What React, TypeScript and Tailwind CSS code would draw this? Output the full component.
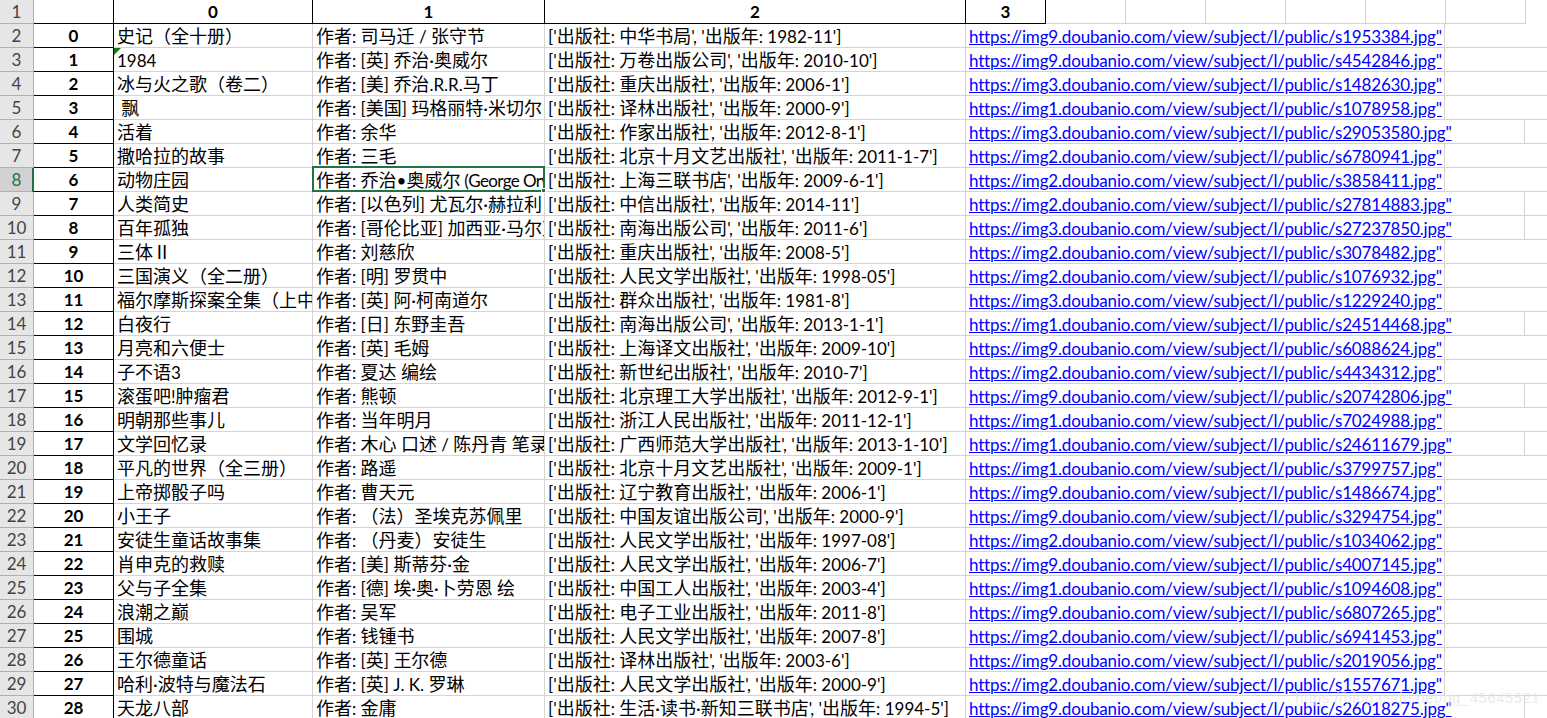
import React from "react";

const rows: [string, string, string, string, string][] = [
  ["史记（全十册）", "作者: 司马迁 / 张守节", "['出版社: 中华书局', '出版年: 1982-11']", "img9", "s1953384"],
  ["1984", "作者: [英] 乔治·奥威尔", "['出版社: 万卷出版公司', '出版年: 2010-10']", "img9", "s4542846"],
  ["冰与火之歌（卷二）", "作者: [美] 乔治.R.R.马丁", "['出版社: 重庆出版社', '出版年: 2006-1']", "img3", "s1482630"],
  [" 飘", "作者: [美国] 玛格丽特·米切尔", "['出版社: 译林出版社', '出版年: 2000-9']", "img1", "s1078958"],
  ["活着", "作者: 余华", "['出版社: 作家出版社', '出版年: 2012-8-1']", "img3", "s29053580"],
  ["撒哈拉的故事", "作者: 三毛", "['出版社: 北京十月文艺出版社', '出版年: 2011-1-7']", "img2", "s6780941"],
  ["动物庄园", "作者: 乔治•奥威尔 (George Orwell)", "['出版社: 上海三联书店', '出版年: 2009-6-1']", "img2", "s3858411"],
  ["人类简史", "作者: [以色列] 尤瓦尔·赫拉利", "['出版社: 中信出版社', '出版年: 2014-11']", "img2", "s27814883"],
  ["百年孤独", "作者: [哥伦比亚] 加西亚·马尔克斯", "['出版社: 南海出版公司', '出版年: 2011-6']", "img3", "s27237850"],
  ["三体Ⅱ", "作者: 刘慈欣", "['出版社: 重庆出版社', '出版年: 2008-5']", "img2", "s3078482"],
  ["三国演义（全二册）", "作者: [明] 罗贯中", "['出版社: 人民文学出版社', '出版年: 1998-05']", "img2", "s1076932"],
  ["福尔摩斯探案全集（上中下）", "作者: [英] 阿·柯南道尔", "['出版社: 群众出版社', '出版年: 1981-8']", "img3", "s1229240"],
  ["白夜行", "作者: [日] 东野圭吾", "['出版社: 南海出版公司', '出版年: 2013-1-1']", "img1", "s24514468"],
  ["月亮和六便士", "作者: [英] 毛姆", "['出版社: 上海译文出版社', '出版年: 2009-10']", "img9", "s6088624"],
  ["子不语3", "作者: 夏达 编绘", "['出版社: 新世纪出版社', '出版年: 2010-7']", "img2", "s4434312"],
  ["滚蛋吧!肿瘤君", "作者: 熊顿", "['出版社: 北京理工大学出版社', '出版年: 2012-9-1']", "img9", "s20742806"],
  ["明朝那些事儿", "作者: 当年明月", "['出版社: 浙江人民出版社', '出版年: 2011-12-1']", "img1", "s7024988"],
  ["文学回忆录", "作者: 木心 口述 / 陈丹青 笔录", "['出版社: 广西师范大学出版社', '出版年: 2013-1-10']", "img1", "s24611679"],
  ["平凡的世界（全三册）", "作者: 路遥", "['出版社: 北京十月文艺出版社', '出版年: 2009-1']", "img1", "s3799757"],
  ["上帝掷骰子吗", "作者: 曹天元", "['出版社: 辽宁教育出版社', '出版年: 2006-1']", "img9", "s1486674"],
  ["小王子", "作者: （法）圣埃克苏佩里", "['出版社: 中国友谊出版公司', '出版年: 2000-9']", "img9", "s3294754"],
  ["安徒生童话故事集", "作者: （丹麦）安徒生", "['出版社: 人民文学出版社', '出版年: 1997-08']", "img2", "s1034062"],
  ["肖申克的救赎", "作者: [美] 斯蒂芬·金", "['出版社: 人民文学出版社', '出版年: 2006-7']", "img9", "s4007145"],
  ["父与子全集", "作者: [德] 埃·奥·卜劳恩 绘", "['出版社: 中国工人出版社', '出版年: 2003-4']", "img1", "s1094608"],
  ["浪潮之巅", "作者: 吴军", "['出版社: 电子工业出版社', '出版年: 2011-8']", "img9", "s6807265"],
  ["围城", "作者: 钱锺书", "['出版社: 人民文学出版社', '出版年: 2007-8']", "img2", "s6941453"],
  ["王尔德童话", "作者: [英] 王尔德", "['出版社: 译林出版社', '出版年: 2003-6']", "img9", "s2019056"],
  ["哈利·波特与魔法石", "作者: [英] J. K. 罗琳", "['出版社: 人民文学出版社', '出版年: 2000-9']", "img2", "s1557671"],
  ["天龙八部", "作者: 金庸", "['出版社: 生活·读书·新知三联书店', '出版年: 1994-5']", "img9", "s26018275"],
];

function Mixed({ text }: { text: string }) {
  const parts = text.split(/([\u0020-\u007e•]+)/).filter(Boolean);
  return (
    <>
      {parts.map((p, i) =>
        /^[\u0020-\u007e•]+$/.test(p) ? (
          <span key={i} className={p.includes("George") ? "text-[17px] tracking-[-0.6px]" : "text-[17px]"}>{p}</span>
        ) : (
          <span key={i} className="text-[18px]">{p}</span>
        )
      )}
    </>
  );
}

const grid = "border-r border-b border-[#d4d4d4]";
const black = "border-r border-b border-black";

export default function App() {
  return (
    <div className="relative h-[718px] w-[1547px] overflow-hidden bg-white font-['Lato','Noto_Sans_CJK_SC',sans-serif] text-black">
      <div className="flex h-6">
        <div className="flex w-[34px] shrink-0 items-center justify-center border-r border-b border-[#b0b0b0] bg-[#e6e6e6] text-[17px] text-[#444]">1</div>
        <div className={`w-20 shrink-0 ${black}`} />
        {[["0", "w-[199px]"], ["1", "w-[232px]"], ["2", "w-[421px]"], ["3", "w-20"]].map(([t, w]) => (
          <div key={t} className={`flex shrink-0 items-center justify-center text-[17px] font-bold ${w} ${black}`}>{t}</div>
        ))}
        {[0, 1, 2, 3, 4, 5].map((i) => (
          <div key={i} className={`w-20 shrink-0 ${grid}`} />
        ))}
      </div>
      {rows.map((r, i) => {
        const sel = i === 6;
        const long = r[4].length > 8;
        return (
          <div key={i} className="flex h-6">
            <div className={`relative flex w-[34px] shrink-0 items-center justify-center border-r border-b border-[#b0b0b0] text-[17px] ${sel ? "bg-[#d2d2d2] text-[#217346]" : "bg-[#e6e6e6] text-[#444]"}`}>
              {i + 2}
              {sel && <div className="absolute -right-px top-0 h-6 w-[2px] bg-[#217346]" />}
            </div>
            <div className={`flex w-20 shrink-0 items-center justify-center text-[17px] font-bold ${black}`}>{i}</div>
            <div className={`relative w-[199px] shrink-0 overflow-hidden whitespace-pre pl-[3px] leading-[25px] ${grid}`}>
              <Mixed text={r[0]} />
              {i === 1 && <div className="absolute left-0 top-0 h-0 w-0 border-t-[7px] border-r-[7px] border-t-[#107c10] border-r-transparent" />}
            </div>
            <div className={`relative w-[232px] shrink-0 whitespace-pre ${grid}`}>
              <div className="h-[23px] overflow-hidden pl-[3px] leading-[25px]"><Mixed text={r[1]} /></div>
              {sel && (
                <div className="absolute -left-px -top-[2px] -right-px -bottom-px z-10 border-2 border-[#217346]">
                  <div className="absolute -bottom-[3px] -right-[3px] h-[5px] w-[5px] border border-white bg-[#217346]" />
                </div>
              )}
            </div>
            <div className={`w-[421px] shrink-0 overflow-hidden whitespace-pre pl-[3px] leading-[25px] ${grid}`}><Mixed text={r[2]} /></div>
            <div className={`shrink-0 overflow-hidden whitespace-pre pl-[3px] text-[17px] leading-[25px] tracking-[-0.17px] text-[#0000ff] underline ${long ? "w-[559px]" : "w-[479px]"} ${grid}`}>
              {`https://${r[3]}.doubanio.com/view/subject/l/public/${r[4]}.jpg"`}
            </div>
            <div className={`shrink-0 ${long ? "w-20" : "w-40"} ${grid}`} />
          </div>
        );
      })}
      <div className="pointer-events-none absolute bottom-[9px] left-[1295px] whitespace-nowrap font-['Liberation_Sans',sans-serif] text-[15px] tracking-[0.45px] text-[#e4e4e4]/75">https://blog.csdn.net/qq_45645521</div>
    </div>
  );
}
